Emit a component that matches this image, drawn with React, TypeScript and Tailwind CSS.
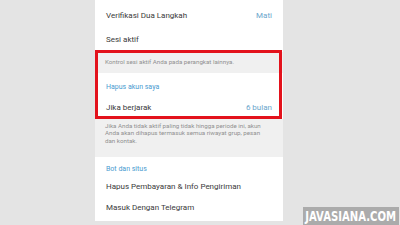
import React from "react";

const font = { fontFamily: "Roboto, 'Noto Sans', sans-serif" };

const App: React.FC = () => {
  return (
    <div
      className="relative w-[400px] h-[225px] overflow-hidden bg-[#e4e4e4]"
      style={font}
    >
      <div className="ml-[95px] w-[188px] h-full flex flex-col">
        <div className="bg-white">
          <div className="h-[28px] pt-[4px] px-[11px] flex items-center justify-between text-[8px] text-[#3a3a3a]">
            <span>Verifikasi Dua Langkah</span>
            <span className="text-[#6aa6cc]">Mati</span>
          </div>
          <div className="h-[24px] px-[11px] flex items-center text-[8px] text-[#3a3a3a]">
            Sesi aktif
          </div>
        </div>

        <div className="h-[21px] bg-[#f0f0f0] px-[10px] flex items-center text-[6.2px] text-[#909090]">
          Kontrol sesi aktif Anda pada perangkat lainnya.
        </div>

        <div className="bg-white">
          <div className="h-[24px] pt-[4px] px-[11px] flex items-center text-[7px] text-[#4a9bd0]">
            Hapus akun saya
          </div>
          <div className="h-[22px] px-[11px] flex items-center justify-between text-[8px] text-[#3a3a3a]">
            <span>Jika berjarak</span>
            <span className="text-[#6aa6cc]">6 bulan</span>
          </div>
        </div>

        <div className="h-[38px] bg-[#f0f0f0] px-[10px] pt-[4px] text-[6.2px] leading-[7.3px] text-[#909090] whitespace-nowrap">
          Jika Anda tidak aktif paling tidak hingga periode ini, akun
          <br />
          Anda akan dihapus termasuk semua riwayat grup, pesan
          <br />
          dan kontak.
        </div>

        <div className="bg-white">
          <div className="h-[22px] pt-[2px] px-[11px] flex items-center text-[7px] text-[#4a9bd0]">
            Bot dan situs
          </div>
          <div className="h-[16px] px-[11px] flex items-center text-[8px] text-[#3a3a3a]">
            Hapus Pembayaran &amp; Info Pengiriman
          </div>
          <div className="h-[26px] px-[11px] flex items-center text-[8px] text-[#3a3a3a]">
            Masuk Dengan Telegram
          </div>
        </div>
      </div>

      {/* red highlight */}
      <div className="absolute left-[95px] top-[50px] w-[187px] h-[69px] border-[3px] border-[#e3121c]" />

      {/* watermark */}
      <div className="absolute left-[303px] top-[207px] w-[96px] h-[18px] bg-[#ababab] flex items-center justify-center overflow-hidden">
        <span
          className="inline-block text-white text-[14px] font-bold leading-none scale-x-[0.8] whitespace-nowrap"
          style={{ fontFamily: "'DejaVu Sans Condensed', 'Liberation Sans', sans-serif" }}
        >
          JAVASIANA.COM
        </span>
      </div>
    </div>
  );
};

export default App;
